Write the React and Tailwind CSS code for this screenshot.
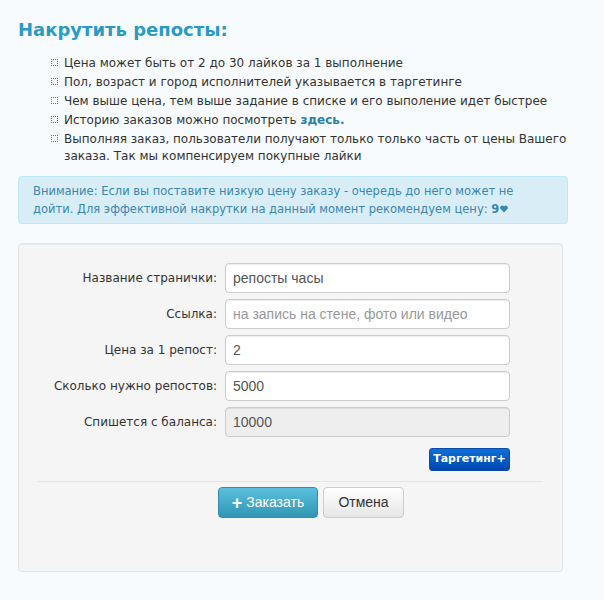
import React from 'react';

const tahoma = { fontFamily: '"DejaVu Sans", Tahoma, sans-serif' };

const Bullet = () => (
  <span className="mt-[5px] mr-[6px] inline-block w-[7px] h-[7px] shrink-0 border border-dotted border-gray-500" />
);

const Heart = () => (
  <svg viewBox="0 0 10 9" className="ml-px inline-block w-[8px] h-[8px] align-baseline" fill="currentColor">
    <path d="M5 9 L0.8 4.6 A2.4 2.4 0 0 1 5 1.4 A2.4 2.4 0 0 1 9.2 4.6 Z" />
  </svg>
);

const Field = ({ label, value, placeholder, disabled }) => (
  <div className="flex items-center">
    <label className="w-[187px] pr-2 text-right text-[12px] text-[#333]">{label}</label>
    <input
      readOnly
      defaultValue={value}
      placeholder={placeholder}
      disabled={disabled}
      className={`w-[285px] h-[30px] px-[7px] rounded border border-[#ccc] text-[14px] text-[#555] placeholder:text-[#999] shadow-[inset_0_1px_1px_rgba(0,0,0,0.075)] ${disabled ? 'bg-[#eee]' : 'bg-white'}`}
      style={{ fontFamily: '"Liberation Sans", Arial, sans-serif' }}
    />
  </div>
);

const rules = [
  'Цена может быть от 2 до 30 лайков за 1 выполнение',
  'Пол, возраст и город исполнителей указывается в таргетинге',
  'Чем выше цена, тем выше задание в списке и его выполение идет быстрее',
];

export default function App() {
  return (
    <div className="min-h-[600px] bg-[#f7fbfd] px-[18px] pt-[18px] pb-7 text-[#333]" style={tahoma}>
      <h1 className="text-[18px] font-bold text-[#2a9cc4] leading-6">Накрутить репосты:</h1>

      <ul className="mt-[12px] ml-[33px] text-[12px] leading-[19px] text-[#333]">
        {rules.map((r) => (
          <li key={r} className="flex items-start">
            <Bullet />
            <span>{r}</span>
          </li>
        ))}
        <li className="flex items-start">
          <Bullet />
          <span>
            Историю заказов можно посмотреть <a className="font-bold text-[#2a7fa5]">здесь.</a>
          </span>
        </li>
        <li className="flex items-start">
          <Bullet />
          <span className="leading-[17px] pt-px">
            Выполняя заказ, пользователи получают только только часть от цены Вашего заказа. Так мы компенсируем покупные лайки
          </span>
        </li>
      </ul>

      <div className="mt-[11px] w-[550px] rounded border border-[#bce8f1] bg-[#d9edf7] pl-[14px] pr-[40px] py-[5px] text-[11.5px] leading-[18px] text-[#3a87ad]">
        Внимание: Если вы поставите низкую цену заказу - очередь до него может не дойти. Для эффективной накрутки на данный момент рекомендуем цену: <b>9</b><Heart />
      </div>

      <div className="mt-[19px] w-[545px] h-[329px] rounded border border-[#e3e3e3] bg-[#f5f5f5] pt-[19px] px-[19px] shadow-[inset_0_1px_1px_rgba(0,0,0,0.05)]">
        <div className="flex flex-col gap-[6px]">
          <Field label="Название странички:" value="репосты часы" />
          <Field label="Ссылка:" placeholder="на запись на стене, фото или видео" />
          <Field label="Цена за 1 репост:" value="2" />
          <Field label="Сколько нужно репостов:" value="5000" />
          <Field label="Спишется с баланса:" value="10000" disabled />
        </div>

        <div className="mt-[11px] flex pl-[391px]">
          <button className="h-[23px] w-[81px] rounded-[3px] border border-[#0a4aa8] bg-gradient-to-b from-[#0e6fd8] to-[#0048b0] text-[11px] font-bold text-white">
            Таргетинг+
          </button>
        </div>

        <div className="mt-[10px] border-t border-[#e5e5e5]" />

        <div className="mt-[5px] flex gap-[5px] pl-[180px]" style={{ fontFamily: '"Liberation Sans", Arial, sans-serif' }}>
          <button className="flex h-[31px] w-[100px] items-center justify-center gap-1 rounded border border-[#2f8fb0] bg-gradient-to-b from-[#5bc0de] to-[#2f96b4] text-[14px] text-white">
            <span className="text-[18px] font-bold leading-none">+</span>Заказать
          </button>
          <button className="h-[31px] w-[81px] rounded border border-[#ccc] bg-gradient-to-b from-white to-[#e6e6e6] text-[14px] text-[#333]">
            Отмена
          </button>
        </div>
      </div>
    </div>
  );
}
